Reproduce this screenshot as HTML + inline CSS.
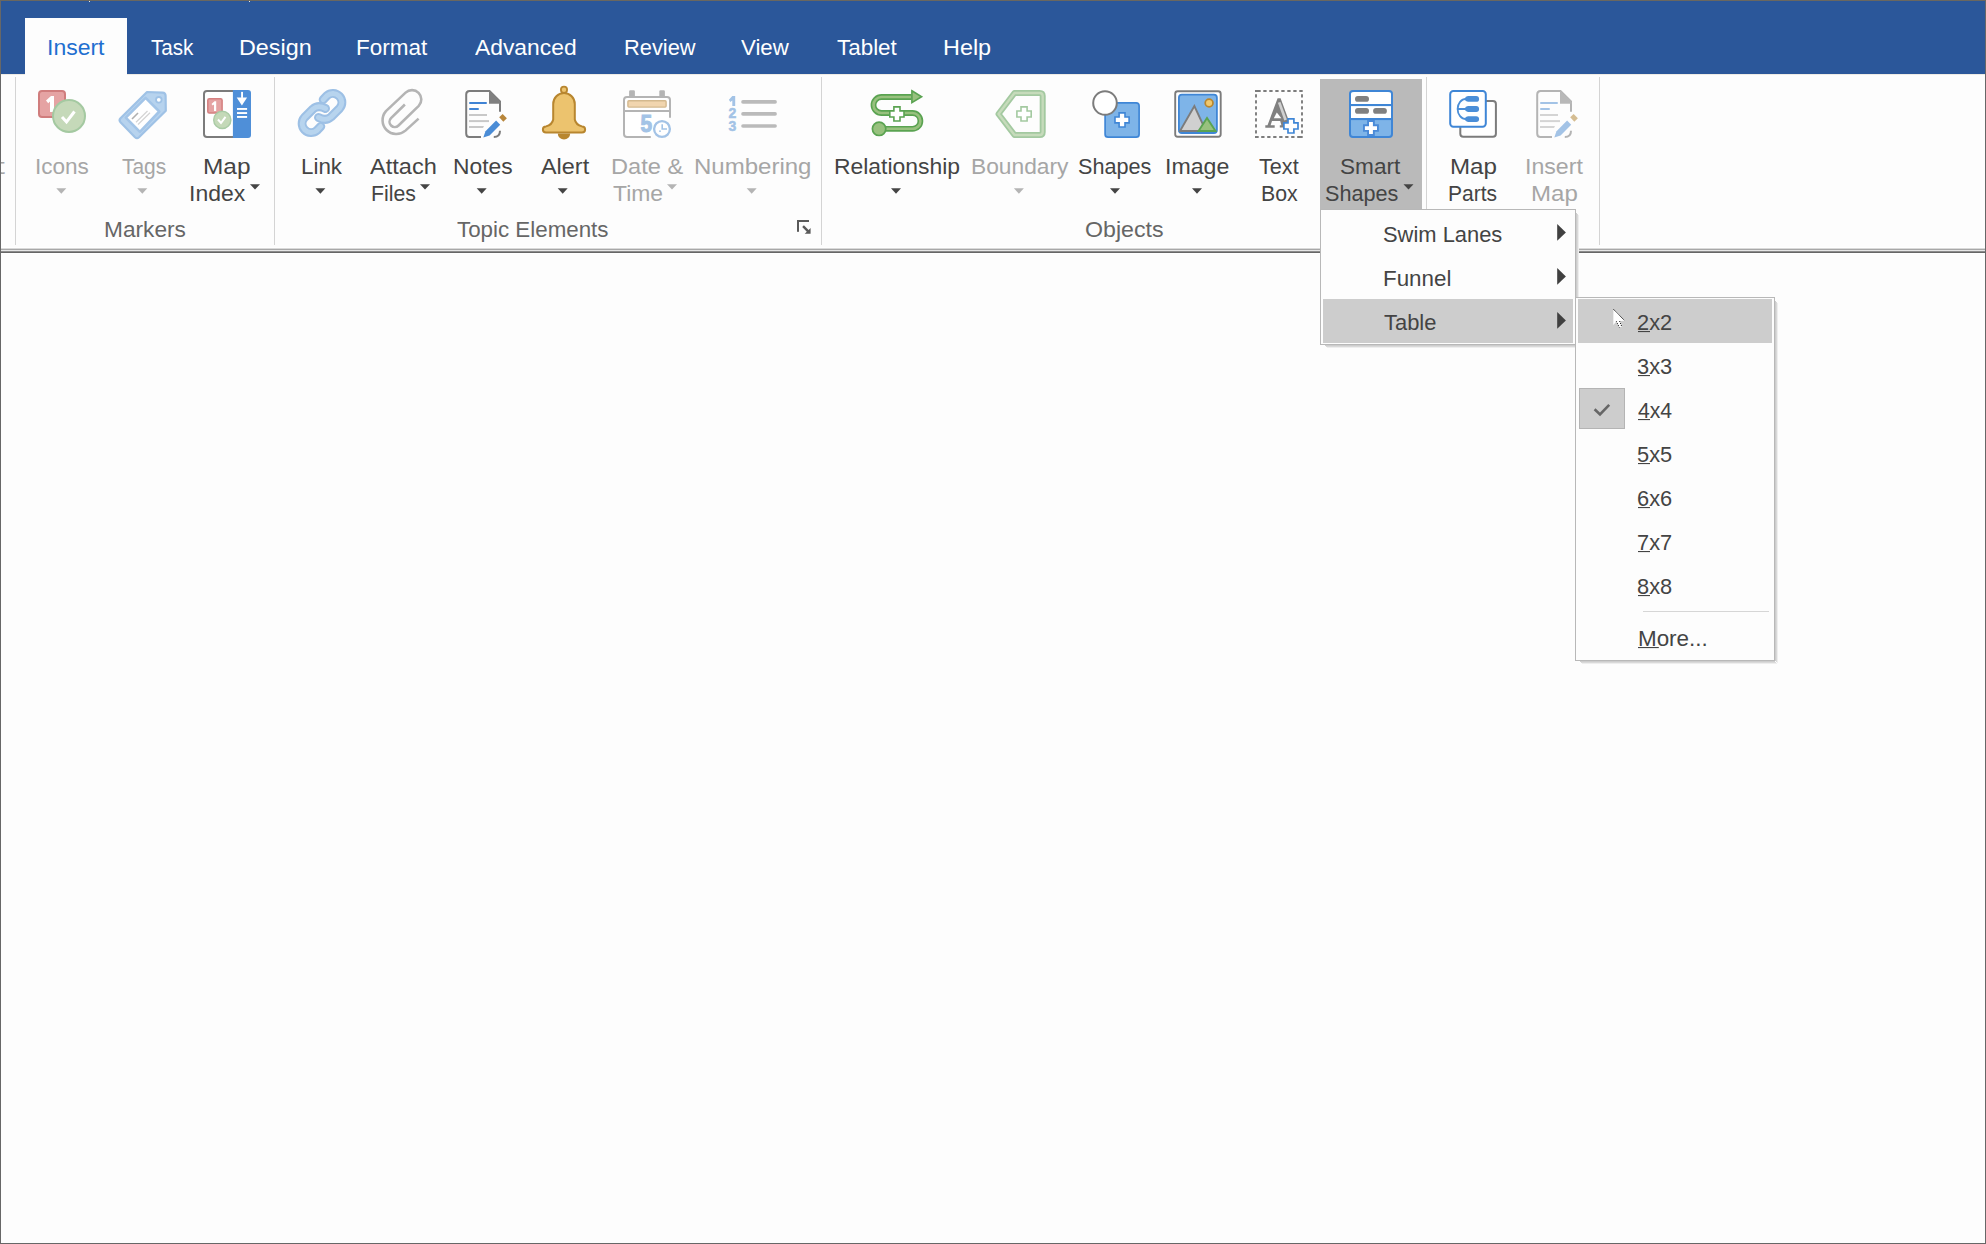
<!DOCTYPE html>
<html><head><meta charset="utf-8"><style>
html,body{margin:0;padding:0;}
body{width:1986px;height:1244px;overflow:hidden;position:relative;background:#fdfdfd;font-family:"Liberation Sans",sans-serif;}
.t{position:absolute;font-size:22px;line-height:22px;white-space:pre;transform-origin:0 0;}
.a{position:absolute;}
</style></head><body>
<div class="a" style="left:0;top:0;width:1986px;height:74px;background:#2b579a"></div>
<div class="a" style="left:25px;top:18px;width:102px;height:56px;background:#fdfdfd"></div>
<div class="a" style="left:0;top:74px;width:1986px;height:175px;background:#fdfdfd"></div>
<div class="a" style="left:0;top:247px;width:1986px;height:1px;background:#ffffff"></div>
<div class="a" style="left:0;top:248px;width:1986px;height:1px;background:#dadada"></div>
<div class="a" style="left:0;top:249px;width:1986px;height:1px;background:#a8a8a8"></div>
<div class="a" style="left:0;top:250px;width:1986px;height:1px;background:#e6e6e6"></div>
<div class="a" style="left:0;top:251px;width:1986px;height:1px;background:#8c8c8c"></div>
<div class="a" style="left:0;top:252px;width:1986px;height:1px;background:#666666"></div>
<div class="a" style="left:0;top:253px;width:1986px;height:1px;background:#ffffff"></div>
<div class="a" style="left:0;top:74px;width:25px;height:1px;background:#eeebe5"></div>
<div class="a" style="left:127px;top:74px;width:1859px;height:1px;background:#eeebe5"></div>
<!-- separators -->
<div class="a" style="left:15px;top:77px;width:1px;height:168px;background:#d4d4d4"></div>
<div class="a" style="left:274px;top:77px;width:1px;height:168px;background:#d4d4d4"></div>
<div class="a" style="left:821px;top:77px;width:1px;height:168px;background:#d4d4d4"></div>
<div class="a" style="left:1426px;top:77px;width:1px;height:168px;background:#d4d4d4"></div>
<div class="a" style="left:1599px;top:77px;width:1px;height:168px;background:#d4d4d4"></div>
<!-- smart shapes pressed -->
<div class="a" style="left:1320px;top:79px;width:102px;height:131px;background:#bababa"></div>
<svg class="a" style="left:0;top:0" width="1986" height="260" viewBox="0 0 1986 260">
<!-- dropdown arrows -->
<g fill="#444444">
<path d="M891,188.2 L901,188.2 L896,193.7 Z"/>
</g>
<g id="arrows">
<path fill="#b4b4b4" d="M56.3,188.2 L66.3,188.2 L61.3,193.7 Z"/>
<path fill="#b4b4b4" d="M137.3,188.2 L147.3,188.2 L142.3,193.7 Z"/>
<path fill="#444" d="M250,184.3 L260,184.3 L255,189.6 Z"/>
<path fill="#444" d="M315.4,188.2 L325.4,188.2 L320.4,193.7 Z"/>
<path fill="#444" d="M420,184.3 L430,184.3 L425,189.6 Z"/>
<path fill="#444" d="M476.7,188.2 L486.7,188.2 L481.7,193.7 Z"/>
<path fill="#444" d="M557.7,188.2 L567.7,188.2 L562.7,193.7 Z"/>
<path fill="#b4b4b4" d="M667,184.3 L677,184.3 L672,189.6 Z"/>
<path fill="#b4b4b4" d="M746.7,188.2 L756.7,188.2 L751.7,193.7 Z"/>
<path fill="#b4b4b4" d="M1013.9,188.2 L1023.9,188.2 L1018.9,193.7 Z"/>
<path fill="#444" d="M1110,188.2 L1120,188.2 L1115,193.7 Z"/>
<path fill="#444" d="M1192,188.2 L1202,188.2 L1197,193.7 Z"/>
<path fill="#444" d="M1403.5,184.3 L1413.5,184.3 L1408.5,189.6 Z"/>
</g>
<!-- dialog launcher -->
<g fill="#5a5a5a">
<rect x="797" y="220" width="12" height="2"/>
<rect x="797" y="220" width="2" height="11.8"/>
<path d="M802.2,226.9 L803.9,225.2 L808.6,229.9 L810.6,227.9 L810.6,233.8 L804.7,233.8 L806.8,231.7 Z"/>
</g>

<!-- Icons (markers) -->
<g>
<rect x="39" y="91" width="26" height="26" rx="3" fill="#e5a3a3" stroke="#d07d7d" stroke-width="2"/>
<path d="M46,100.5 L51,96 L54,96 L54,112 L50,112 L50,101.5 L48.2,103.2 Z" fill="#ffffff"/>
<circle cx="69" cy="116" r="16" fill="#c5d9b9" stroke="#a4c9a1" stroke-width="2"/>
<path d="M62,117 L66.5,122 L74.5,111.5" fill="none" stroke="#ffffff" stroke-width="3"/>
</g>

<!-- Tags -->
<g>
<path d="M147,92 L162.5,92.6 Q165.5,92.8 165.6,95.8 L165.8,110.8 L139,137.2 Q137,139 135,137.2 L120.5,122.2 Q118.7,120.2 120.5,118.3 Z" fill="#b7d3ee" stroke="#9fc2e6" stroke-width="2.2" stroke-linejoin="round"/>
<path d="M145.6,97.8 L159.3,111.5 L139.9,131.8 L125.8,117.7 Z" fill="#ffffff" stroke="#a3c5e8" stroke-width="2.6" stroke-linejoin="round"/>
<circle cx="158.8" cy="99.8" r="2.8" fill="#ffffff" stroke="#9fc2e6" stroke-width="1.8"/>
<path d="M132,119 L138,113" stroke="#b0b0b0" stroke-width="1.6"/>
<path d="M136,122.3 L147.5,111" stroke="#d4d4d4" stroke-width="1.2"/>
<path d="M138,124.5 L150,112.8" stroke="#d4d4d4" stroke-width="1.2"/>
</g>

<!-- Map Index -->
<g>
<path d="M233,91 L207,91 Q204,91 204,94 L204,134 Q204,137 207,137 L233,137" fill="#ffffff" stroke="#7c7c7c" stroke-width="2"/>
<path d="M232.9,90 L248,90 Q251,90 251,93 L251,135 Q251,138 248,138 L232.9,138 Z" fill="#4f8fd8"/>
<rect x="241.1" y="91.9" width="1.9" height="6" fill="#fff"/>
<path d="M236.7,97.4 L247.1,97.4 L241.9,105.6 Z" fill="#fff"/>
<rect x="237" y="108" width="10.1" height="1.9" fill="#fff"/>
<rect x="237" y="112.1" width="10.1" height="1.9" fill="#fff"/>
<rect x="237" y="116" width="10.1" height="1.9" fill="#fff"/>
<rect x="207.8" y="98.7" width="14.3" height="14.3" rx="1.5" fill="#e5a3a3" stroke="#d58080" stroke-width="1.5"/>
<path d="M211.5,104 L214.5,101.2 L216.2,101.2 L216.2,111 L214,111 L214,104.4 L212.8,105.5 Z" fill="#fff"/>
<circle cx="222.3" cy="119.9" r="8.6" fill="#c4d9b8" stroke="#a9cba5" stroke-width="1.4"/>
<path d="M218,119.5 L221,123 L225.5,116.8" fill="none" stroke="#fff" stroke-width="2"/>
</g>

<!-- Link -->
<g fill="none" stroke-linecap="round" stroke-linejoin="round">
<path id="lk1" d="M323.2,99.6 L327,95.6 A9,9 0 0 1 339.5,108.5 L331,117 Q326,121.5 318.5,117.5" stroke="#9dc0e5" stroke-width="9"/>
<path d="M323.2,99.6 L327,95.6 A9,9 0 0 1 339.5,108.5 L331,117 Q326,121.5 318.5,117.5" stroke="#b7d4ee" stroke-width="4.9"/>
<g transform="rotate(180 322 113)">
<path d="M323.2,99.6 L327,95.6 A9,9 0 0 1 339.5,108.5 L331,117 Q326,121.5 318.5,117.5" stroke="#9dc0e5" stroke-width="9"/>
<path d="M323.2,99.6 L327,95.6 A9,9 0 0 1 339.5,108.5 L331,117 Q326,121.5 318.5,117.5" stroke="#b7d4ee" stroke-width="4.9"/>
</g>
</g>

<!-- Attach Files -->
<path transform="translate(402 112) scale(1.07) translate(-402 -112)" d="M417.5,118.2 L405.2,129.4 A12.9,12.9 0 0 1 387,111.2 L405.35,93.95 A8.7,8.7 0 0 1 417.65,106.25 L398.75,124.65 A4.95,4.95 0 0 1 391.75,117.65 L404.7,105" fill="none" stroke="#b4b4b4" stroke-width="2.4" stroke-linecap="butt" stroke-linejoin="round"/>

<!-- Notes -->
<g id="notes">
<path d="M500,111.7 L500,101.5 L489.5,91 L469.5,91 Q466.2,91 466.2,94.5 L466.2,133.5 Q466.2,137 469.5,137 L481,137" fill="none" stroke="#7c7c7c" stroke-width="2"/>
<path d="M493.8,137 Q500,137 500,130.7" fill="none" stroke="#7c7c7c" stroke-width="2"/>
<path d="M489,90.5 L501,102 L501,103.7 L489,103.7 Z" fill="#808080"/>
<rect x="469" y="102" width="18" height="2" rx="1" fill="#3f83d4"/>
<rect x="469" y="108" width="10" height="2" rx="1" fill="#3f83d4"/>
<rect x="469" y="114" width="18" height="2" fill="#c8c8c8"/>
<rect x="469" y="120.1" width="20" height="2" fill="#c8c8c8"/>
<path d="M469,126 L484,126 L483,128 L469,128 Z" fill="#c8c8c8"/>
<path d="M485.5,131.2 L496.1,120.6 L500.2,124.7 L489.6,135.5 L483.3,137.5 Z" fill="#4a8cd6"/>
<path d="M499.2,117.2 L502.6,114.1 L506.9,118.2 L503.3,121.8 Z" fill="#b8863b"/>
</g>

<!-- Alert -->
<g>
<path d="M557.8,133.4 A6.2,6.2 0 0 0 570.2,133.4 Z" fill="#b8862f"/>
<circle cx="564" cy="89.8" r="3.1" fill="#ecc36e" stroke="#b8862f" stroke-width="1.8"/>
<path d="M553.2,104 A10.8,11 0 0 1 574.8,104 L574.8,119.5 C575.5,123.5 578.5,125.5 582,126.4 A3.1,3.1 0 0 1 582,132.6 L546,132.6 A3.1,3.1 0 0 1 546,126.4 C549.5,125.5 552.5,123.5 553.2,119.5 Z" fill="#ecc36e" stroke="#b8862f" stroke-width="2"/>
</g>

<!-- Date & Time -->
<g>
<path d="M670,117.7 L670,100 Q670,97 667,97 L627,97 Q624,97 624,100 L624,134 Q624,137 627,137 L650.8,137" fill="#fff" stroke="#b4b4b4" stroke-width="2"/>
<rect x="629.1" y="90.2" width="5.8" height="7" rx="1.2" fill="#b4b4b4"/>
<rect x="659.3" y="90.2" width="5.6" height="7" rx="1.2" fill="#b4b4b4"/>
<rect x="624" y="110" width="46" height="2" fill="#b4b4b4"/>
<rect x="627.9" y="100.8" width="38.2" height="6.3" rx="1" fill="#f1d5ae" stroke="#d4b98e" stroke-width="1.4"/>
<text x="640.5" y="131.7" style="font-family:'Liberation Sans';font-weight:bold;font-size:24.5px" fill="#a3c3e6" stroke="#a3c3e6" stroke-width="1.1" transform="translate(640.5 131.7) scale(0.85 1) translate(-640.5 -131.7)">5</text>
<circle cx="662" cy="129" r="7.9" fill="#fff" stroke="#a3c3e6" stroke-width="2.3"/>
<path d="M662.2,124.2 L662.2,129 L667,129" fill="none" stroke="#a3c3e6" stroke-width="1.6"/>
<rect x="659.2" y="130.4" width="1.6" height="1.6" fill="#a3c3e6"/>
</g>

<!-- Numbering -->
<g>
<rect x="741.2" y="100.1" width="35.7" height="3.6" rx="1.8" fill="#bababa"/>
<rect x="741.2" y="112.1" width="35.7" height="3.6" rx="1.8" fill="#bababa"/>
<rect x="741.2" y="124.2" width="35.7" height="3.6" rx="1.8" fill="#bababa"/>
<g style="font-family:'Liberation Sans';font-weight:bold;font-size:14px" fill="#a3c3e6" stroke="#a3c3e6" stroke-width="0.5">
</g><path d="M732.3,96 L735.2,96 L735.2,106 L732.3,106 L732.3,100.4 L730.3,101.9 L728.9,99.7 Z" fill="#a3c3e6"/><g style="font-family:'Liberation Sans';font-weight:bold;font-size:14px" fill="#a3c3e6" stroke="#a3c3e6" stroke-width="0.5">
<text x="728.5" y="118">2</text>
<text x="728.5" y="130.7">3</text>
</g>
</g>

<!-- Relationship -->
<g>
<path d="M911.5,97 L881.5,97 A8,8 0 0 0 881.5,113 L912.5,113 A7.9,7.9 0 0 1 912.5,128.8 L880,128.8" fill="none" stroke="#5aa351" stroke-width="5.8"/>
<path d="M911.5,97 L881.5,97 A8,8 0 0 0 881.5,113 L912.5,113 A7.9,7.9 0 0 1 912.5,128.8 L880,128.8" fill="none" stroke="#98c17e" stroke-width="2.6"/>
<path d="M911.9,90.8 L921.6,96.7 L911.9,102.6 Z" fill="#98c17e" stroke="#5aa351" stroke-width="1.6" stroke-linejoin="miter"/>
<circle cx="879.1" cy="128.8" r="6.7" fill="#98c17e" stroke="#5aa351" stroke-width="1.7"/>
<path d="M893.9,106.9 L900,106.9 L900,111 L904,111 L904,117 L900,117 L900,121 L893.9,121 L893.9,117 L889.8,117 L889.8,111 L893.9,111 Z" fill="#fff" stroke="#5aa351" stroke-width="1.6"/>
</g>

<!-- Boundary -->
<g>
<path d="M1014.5,93 L1039.7,93 Q1042.7,93 1042.7,96 L1042.7,132 Q1042.7,135 1039.7,135 L1014.5,135 L998.5,114 Z" fill="none" stroke="#a3c9a0" stroke-width="6" stroke-linejoin="round"/>
<path d="M1014.5,93 L1039.7,93 Q1042.7,93 1042.7,96 L1042.7,132 Q1042.7,135 1039.7,135 L1014.5,135 L998.5,114 Z" fill="none" stroke="#c6dbbb" stroke-width="2.4" stroke-linejoin="round"/>
<path d="M1021,106.9 L1027.1,106.9 L1027.1,111 L1031.2,111 L1031.2,117 L1027.1,117 L1027.1,121 L1021,121 L1021,117 L1016.9,117 L1016.9,111 L1021,111 Z" fill="#fff" stroke="#a3c9a0" stroke-width="1.6"/>
</g>

<!-- Shapes -->
<g>
<rect x="1105.1" y="102.8" width="34" height="34.4" rx="3" fill="#7eb4e8" stroke="#3f86d6" stroke-width="1.7"/>
<circle cx="1105" cy="103" r="11.8" fill="#fff" stroke="#7c7c7c" stroke-width="2"/>
<path d="M1119.1,112.9 L1125,112.9 L1125,117 L1129.1,117 L1129.1,122.9 L1125,122.9 L1125,127 L1119.1,127 L1119.1,122.9 L1115,122.9 L1115,117 L1119.1,117 Z" fill="#fff" stroke="#3f86d6" stroke-width="1.6"/>
</g>

<!-- Image -->
<g>
<rect x="1175.2" y="91.2" width="45.5" height="45.5" rx="2.5" fill="#fff" stroke="#7c7c7c" stroke-width="1.9"/>
<rect x="1178.9" y="94.7" width="38" height="38.3" rx="3" fill="#7eb4e8" stroke="#3f86d6" stroke-width="1.8"/>
<circle cx="1209.1" cy="103" r="3.9" fill="#f0c86e" stroke="#b8862f" stroke-width="1.7"/>
<path d="M1194.4,106 L1180,131 L1206,131 Z" fill="#d0d0d0" stroke="#7c7c7c" stroke-width="1.9" stroke-linejoin="miter"/>
<path d="M1207,118 L1198.5,131 L1215.5,131 Z" fill="#98c17e" stroke="#5aa351" stroke-width="1.9"/>
</g>

<!-- Text Box -->
<g>
<path d="M1255,91 H1260.7 M1263.3,91 H1266.6 M1269.3,91 H1272.6 M1275.3,91 H1278.6 M1281.3,91 H1284.6 M1287.3,91 H1290.6 M1293.3,91 H1296.6 M1299.3,91 H1302.7 M1255,137 H1258.7 M1261.2,137 H1264.5 M1267.2,137 H1270.5 M1273.2,137 H1276.5 M1279.2,137 H1282.5 M1285.2,137 H1288.5 M1291.2,137 H1294.5 M1297.2,137 H1302.7" fill="none" stroke="#7c7c7c" stroke-width="1.9"/>
<path d="M1256,94.3 V134 M1302,94.3 V134" fill="none" stroke="#7c7c7c" stroke-width="1.9" stroke-dasharray="3.3 2.7"/>
<path d="M1277.6,98.2 L1280.6,98.2 L1289.5,122.5 L1286,126 L1283.8,126 L1283.8,127.6 L1279.8,127.6 L1279.8,125.3 L1281.4,125.3 L1280.2,121.1 L1272,121.1 L1270.6,125.3 L1274.7,125.3 L1274.7,127.7 L1265.3,127.7 L1265.3,125.3 L1267.5,125.3 Z" fill="#808080"/>
<path d="M1276.8,112.6 L1273.8,118.2 L1281.4,118.2 Z" fill="#fdfdfd"/>
<path d="M1279.2,102.4 L1285.6,120" stroke="#d0d0d0" stroke-width="2.7"/>
<path d="M1288,118.8 L1293.9,118.8 L1293.9,122.8 L1298,122.8 L1298,129 L1293.9,129 L1293.9,133 L1288,133 L1288,129 L1283.9,129 L1283.9,122.8 L1288,122.8 Z" fill="#fff" stroke="#3f86d6" stroke-width="1.7"/>
</g>

<!-- Smart Shapes -->
<g>
<rect x="1350" y="91" width="42" height="46" rx="3" fill="#7eb4e8" stroke="#3f86d6" stroke-width="2"/>
<path d="M1351,94 Q1351,92 1354,92 L1388,92 Q1391,92 1391,94 L1391,118.5 L1351,118.5 Z" fill="#fff"/>
<rect x="1350" y="104" width="42" height="2.1" fill="#3f86d6"/>
<rect x="1350" y="118" width="42" height="2.1" fill="#3f86d6"/>
<rect x="1355" y="96" width="14" height="5.8" rx="2.9" fill="#808080"/>
<rect x="1355" y="108" width="14" height="5.8" rx="2.9" fill="#808080"/>
<rect x="1373.1" y="108" width="13.8" height="5.8" rx="2.9" fill="#808080"/>
<path d="M1367.1,120.1 L1374.8,120.1 L1374.8,124.2 L1378.9,124.2 L1378.9,131.7 L1374.8,131.7 L1374.8,136 L1367.1,136 L1367.1,131.7 L1363,131.7 L1363,124.2 L1367.1,124.2 Z" fill="#4a8ad8"/>
<path d="M1369,122 L1372.9,122 L1372.9,126.2 L1377,126.2 L1377,130 L1372.9,130 L1372.9,133.9 L1369,133.9 L1369,130 L1364.9,130 L1364.9,126.2 L1369,126.2 Z" fill="#fff"/>
</g>

<!-- Map Parts -->
<g>
<rect x="1460.3" y="101.1" width="35.6" height="35.6" rx="3" fill="#fff" stroke="#7c7c7c" stroke-width="2"/>
<rect x="1450.2" y="91" width="35.6" height="35.8" rx="3.2" fill="#fff" stroke="#3f86d6" stroke-width="2"/>
<path d="M1466,98.9 A8.4,10.1 0 0 0 1466,119.1 M1457.6,109 L1466,109" fill="none" stroke="#4a8ed8" stroke-width="1.8"/>
<path d="M1464.5,98.9 Q1465.5,96 1468,96 L1476.2,96 A2.9,2.9 0 0 1 1476.2,101.8 L1468,101.8 Q1465.5,101.8 1464.5,98.9 Z" fill="#4a8ed8"/>
<path d="M1464.5,109 Q1465.5,106.1 1468,106.1 L1476.2,106.1 A2.9,2.9 0 0 1 1476.2,111.9 L1468,111.9 Q1465.5,111.9 1464.5,109 Z" fill="#4a8ed8"/>
<path d="M1464.5,119.1 Q1465.5,116.2 1468,116.2 L1476.2,116.2 A2.9,2.9 0 0 1 1476.2,122 L1468,122 Q1465.5,122 1464.5,119.1 Z" fill="#4a8ed8"/>
</g>

<!-- Insert Map (faded notes) -->
<g transform="translate(1071 0)">
<path d="M500,111.7 L500,101.5 L489.5,91 L469.5,91 Q466.2,91 466.2,94.5 L466.2,133.5 Q466.2,137 469.5,137 L481,137" fill="none" stroke="#b4b4b4" stroke-width="2"/>
<path d="M493.8,137 Q500,137 500,130.7" fill="none" stroke="#b4b4b4" stroke-width="2"/>
<path d="M489,90.5 L501,102 L501,103.7 L489,103.7 Z" fill="#b8b8b8"/>
<rect x="469" y="102" width="18" height="2" rx="1" fill="#a3c3e6"/>
<rect x="469" y="108" width="10" height="2" rx="1" fill="#a3c3e6"/>
<rect x="469" y="114" width="18" height="2" fill="#d4d4d4"/>
<rect x="469" y="120.1" width="20" height="2" fill="#d4d4d4"/>
<path d="M469,126 L484,126 L483,128 L469,128 Z" fill="#d4d4d4"/>
<path d="M485.5,131.2 L496.1,120.6 L500.2,124.7 L489.6,135.5 L483.3,137.5 Z" fill="#a3c3e6"/>
<path d="M499.2,117.2 L502.6,114.1 L506.9,118.2 L503.3,121.8 Z" fill="#d5bd92"/>
</g>
</svg>
<!-- menu arrows, check, cursor drawn in separate svg after menus -->

<!-- menu 1 -->
<div class="a" style="left:1320px;top:209px;width:256px;height:136px;box-sizing:border-box;background:#fdfdfd;border:1px solid #b8b8b8"></div>
<div class="a" style="left:1576px;top:213px;width:1px;height:132px;background:#cdcdcd"></div><div class="a" style="left:1325px;top:345px;width:251px;height:1px;background:#cdcdcd"></div><div class="a" style="left:1577px;top:214px;width:1px;height:132px;background:#d9d9d9"></div><div class="a" style="left:1326px;top:346px;width:251px;height:1px;background:#d9d9d9"></div><div class="a" style="left:1578px;top:215px;width:1px;height:132px;background:#eeeeee"></div><div class="a" style="left:1327px;top:347px;width:251px;height:1px;background:#eeeeee"></div>
<div class="a" style="left:1323px;top:299px;width:250px;height:44px;background:#cdcdcd"></div>
<!-- submenu -->
<div class="a" style="left:1575px;top:297px;width:200px;height:364px;box-sizing:border-box;background:#fdfdfd;border:1px solid #b8b8b8"></div>
<div class="a" style="left:1775px;top:301px;width:1px;height:360px;background:#cdcdcd"></div><div class="a" style="left:1580px;top:661px;width:195px;height:1px;background:#cdcdcd"></div><div class="a" style="left:1776px;top:302px;width:1px;height:360px;background:#d9d9d9"></div><div class="a" style="left:1581px;top:662px;width:195px;height:1px;background:#d9d9d9"></div><div class="a" style="left:1777px;top:303px;width:1px;height:360px;background:#eeeeee"></div><div class="a" style="left:1582px;top:663px;width:195px;height:1px;background:#eeeeee"></div>
<div class="a" style="left:1578px;top:299px;width:194px;height:44px;background:#cdcdcd"></div>
<div class="a" style="left:1579px;top:388px;width:46px;height:41px;background:#cdcdcd;border:1px solid #b4b4b4;box-sizing:border-box"></div>
<div class="a" style="left:1643px;top:611px;width:126px;height:1px;background:#d6d6d6"></div>
<div class='t' style='left:47.01px;top:37px;color:#1f6fd0;transform:scaleX(1.0453)'>Insert</div><div class='t' style='left:151.00px;top:37px;color:#ffffff;transform:scaleX(0.9378)'>Task</div><div class='t' style='left:238.64px;top:37px;color:#ffffff;transform:scaleX(1.0606)'>Design</div><div class='t' style='left:355.98px;top:37px;color:#ffffff;transform:scaleX(1.0217)'>Format</div><div class='t' style='left:475.30px;top:37px;color:#ffffff;transform:scaleX(1.0381)'>Advanced</div><div class='t' style='left:623.61px;top:37px;color:#ffffff;transform:scaleX(0.9915)'>Review</div><div class='t' style='left:741.00px;top:37px;color:#ffffff;transform:scaleX(1.0104)'>View</div><div class='t' style='left:836.90px;top:37px;color:#ffffff;transform:scaleX(1.0186)'>Tablet</div><div class='t' style='left:942.54px;top:37px;color:#ffffff;transform:scaleX(1.0636)'>Help</div><div class='t' style='left:-8.20px;top:156px;color:#a6a6a6;transform:scaleX(2.1333)'>t</div><div class='t' style='left:34.95px;top:156px;color:#a6a6a6;transform:scaleX(1.0240)'>Icons</div><div class='t' style='left:121.60px;top:156px;color:#a6a6a6;transform:scaleX(0.9522)'>Tags</div><div class='t' style='left:202.89px;top:156px;color:#444444;transform:scaleX(1.1098)'>Map</div><div class='t' style='left:188.91px;top:183px;color:#444444;transform:scaleX(1.0442)'>Index</div><div class='t' style='left:301.38px;top:156px;color:#444444;transform:scaleX(1.0154)'>Link</div><div class='t' style='left:369.80px;top:156px;color:#444444;transform:scaleX(1.0705)'>Attach</div><div class='t' style='left:370.83px;top:183px;color:#444444;transform:scaleX(0.9667)'>Files</div><div class='t' style='left:452.86px;top:156px;color:#444444;transform:scaleX(1.0375)'>Notes</div><div class='t' style='left:540.90px;top:156px;color:#444444;transform:scaleX(1.0644)'>Alert</div><div class='t' style='left:611.13px;top:156px;color:#a6a6a6;transform:scaleX(1.0727)'>Date &amp;</div><div class='t' style='left:613.40px;top:183px;color:#a6a6a6;transform:scaleX(1.0404)'>Time</div><div class='t' style='left:694.01px;top:156px;color:#a6a6a6;transform:scaleX(1.0914)'>Numbering</div><div class='t' style='left:834.06px;top:156px;color:#444444;transform:scaleX(1.0412)'>Relationship</div><div class='t' style='left:970.77px;top:156px;color:#a6a6a6;transform:scaleX(1.0344)'>Boundary</div><div class='t' style='left:1078.32px;top:156px;color:#444444;transform:scaleX(0.9822)'>Shapes</div><div class='t' style='left:1164.90px;top:156px;color:#444444;transform:scaleX(1.0508)'>Image</div><div class='t' style='left:1259.30px;top:156px;color:#444444;transform:scaleX(0.9829)'>Text</div><div class='t' style='left:1260.83px;top:183px;color:#444444;transform:scaleX(0.9676)'>Box</div><div class='t' style='left:1340.27px;top:156px;color:#444444;transform:scaleX(1.0276)'>Smart</div><div class='t' style='left:1324.72px;top:183px;color:#444444;transform:scaleX(0.9822)'>Shapes</div><div class='t' style='left:1450.20px;top:156px;color:#444444;transform:scaleX(1.0976)'>Map</div><div class='t' style='left:1448.34px;top:183px;color:#444444;transform:scaleX(0.9560)'>Parts</div><div class='t' style='left:1524.80px;top:156px;color:#a6a6a6;transform:scaleX(1.0509)'>Insert</div><div class='t' style='left:1531.11px;top:183px;color:#a6a6a6;transform:scaleX(1.0927)'>Map</div><div class='t' style='left:103.97px;top:219px;color:#666666;transform:scaleX(1.0308)'>Markers</div><div class='t' style='left:456.80px;top:219px;color:#666666;transform:scaleX(1.0154)'>Topic Elements</div><div class='t' style='left:1084.55px;top:219px;color:#666666;transform:scaleX(1.0521)'>Objects</div><div class='t' style='left:1382.60px;top:224px;color:#444444;transform:scaleX(0.9958)'>Swim Lanes</div><div class='t' style='left:1382.58px;top:268px;color:#444444;transform:scaleX(1.0169)'>Funnel</div><div class='t' style='left:1383.60px;top:312px;color:#444444;transform:scaleX(0.9962)'>Table</div><div class='t' style='left:1637.21px;top:312px;color:#444444;transform:scaleX(0.9912)'>2x2</div><div class='t' style='left:1637.21px;top:356px;color:#444444;transform:scaleX(0.9912)'>3x3</div><div class='t' style='left:1638.20px;top:400px;color:#444444;transform:scaleX(0.9629)'>4x4</div><div class='t' style='left:1637.21px;top:444px;color:#444444;transform:scaleX(0.9912)'>5x5</div><div class='t' style='left:1637.21px;top:488px;color:#444444;transform:scaleX(0.9912)'>6x6</div><div class='t' style='left:1637.21px;top:532px;color:#444444;transform:scaleX(0.9912)'>7x7</div><div class='t' style='left:1637.21px;top:576px;color:#444444;transform:scaleX(0.9912)'>8x8</div><div class='t' style='left:1637.78px;top:628px;color:#444444;transform:scaleX(1.0182)'>More...</div>
<svg class="a" style="left:1300px;top:200px" width="500" height="480" viewBox="1300 200 500 480">
<g fill="#404040">
<path d="M1557.2,224.1 L1565.9,232.4 L1557.2,240.7 Z"/>
<path d="M1557.2,268.1 L1565.9,276.4 L1557.2,284.7 Z"/>
<path d="M1557.2,312.1 L1565.9,320.4 L1557.2,328.7 Z"/>
</g>
<path d="M1594.6,409.2 L1600,414.4 L1609.2,404.8" fill="none" stroke="#666" stroke-width="2.6"/>
<g fill="#444">
<rect x="1638" y="331" width="12" height="1.1"/>
<rect x="1638" y="375" width="12" height="1.1"/>
<rect x="1638" y="419" width="12" height="1.1"/>
<rect x="1638" y="463" width="12" height="1.1"/>
<rect x="1638" y="507" width="12" height="1.1"/>
<rect x="1638" y="551" width="12" height="1.1"/>
<rect x="1638" y="595" width="12" height="1.1"/>
<rect x="1638" y="647" width="20.8" height="1.1"/>
</g>
<!-- cursor -->
<path d="M1613.4,309.2 L1624.7,320.7 L1619.6,321.1 L1621.9,326.4 L1619.6,327.6 L1616.4,321.6 L1613.3,325 Z" fill="#fff"/>
<path d="M1613.4,309.2 L1624.7,320.7" stroke="#000" stroke-width="1" stroke-dasharray="0.9 0.7"/>
<path d="M1619.5,321 L1621.7,326.4 M1616.3,321.3 L1619.5,327.6" stroke="#000" stroke-width="1" stroke-dasharray="0.9 1.3"/>
</svg>

<div class="a" style="left:89px;top:1px;width:1px;height:1px;background:#e8e8e8"></div>
<div class="a" style="left:249px;top:1px;width:1px;height:1px;background:#e8e8e8"></div>
<!-- outer border -->
<div class="a" style="left:0;top:0;width:1986px;height:1244px;box-sizing:border-box;border:1px solid #676767;border-top-color:#6a675f;pointer-events:none"></div>
</body></html>
